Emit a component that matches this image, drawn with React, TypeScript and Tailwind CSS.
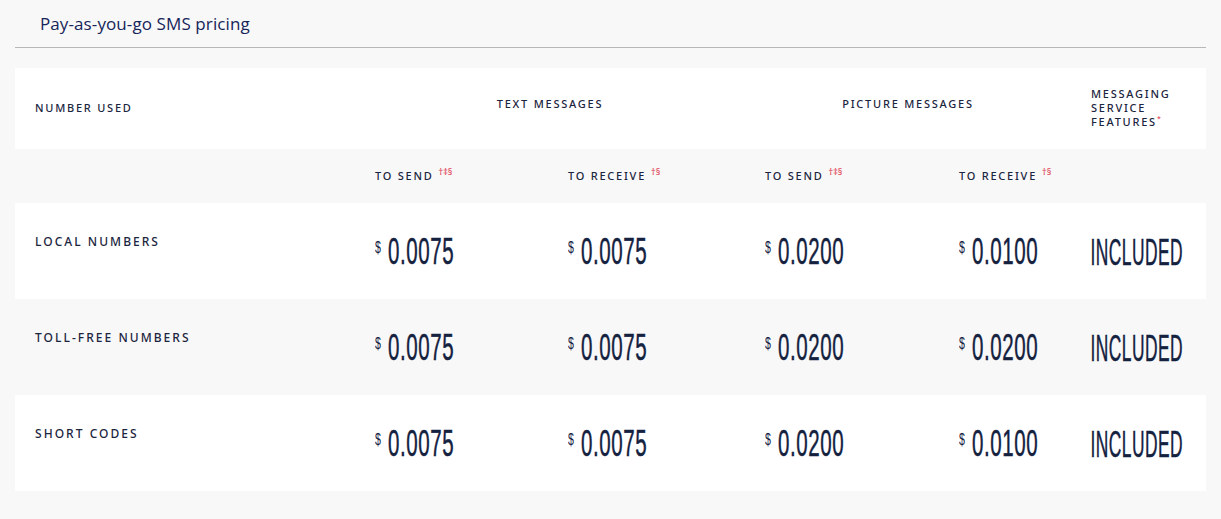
const cols = 'grid grid-cols-[340px_193px_197px_194px_132px_134px]'

const rows = [
  { label: 'LOCAL NUMBERS', prices: ['0.0075', '0.0075', '0.0200', '0.0100'], bg: 'bg-white' },
  { label: 'TOLL-FREE NUMBERS', prices: ['0.0075', '0.0075', '0.0200', '0.0200'], bg: 'bg-[#f8f8f8]' },
  { label: 'SHORT CODES', prices: ['0.0075', '0.0075', '0.0200', '0.0100'], bg: 'bg-white' },
]

function Sup({ marks }: { marks: string }) {
  return <span className="ml-[5px] text-[9px] leading-none text-[#e0485a] tracking-normal relative -top-[5px]">{marks}</span>
}

function Price({ value }: { value: string }) {
  return (
    <div className="flex items-start pl-[20px] pt-[2px] text-[#14213f]">
      <span className="shrink-0 text-[17px] leading-none inline-block scale-x-[0.62] origin-left font-['Liberation_Sans',sans-serif] mt-[1px] w-[13px]">$</span>
      <span className="shrink-0 text-[37px] leading-[28px] inline-block scale-x-[0.555] origin-left font-['Liberation_Sans',sans-serif] tracking-[1px] whitespace-nowrap [-webkit-text-stroke:0.5px_#14213f]">{value}</span>
    </div>
  )
}

export default function App() {
  return (
    <div className="min-h-screen bg-[#f8f8f8] px-[15px] font-['Noto_Sans',sans-serif]">
      {/* Title */}
      <div className="border-b border-[#b7b7b7] pl-[25px] pt-[13px] pb-[12px]">
        <h2 className="text-[17px] leading-[22px] tracking-[0.1px] text-[#16245a] font-medium font-['Open_Sans',sans-serif]">Pay-as-you-go SMS pricing</h2>
      </div>

      <div className="mt-[20px] text-[#1b2540]">
        {/* Group header */}
        <div className={`${cols} bg-white h-[81px] items-center text-[11px] tracking-[0.16em] font-medium`}>
          <div className="pl-[20px]">NUMBER USED</div>
          <div className="col-span-2 text-center pb-[8px]">TEXT MESSAGES</div>
          <div className="col-span-2 text-center pb-[8px]">PICTURE MESSAGES</div>
          <div className="pl-[20px] leading-[14px]">
            MESSAGING<br />SERVICE<br />FEATURES<span className="text-[7px] text-[#e0485a] relative -top-[5px] tracking-normal">*</span>
          </div>
        </div>

        {/* Sub header */}
        <div className={`${cols} h-[54px] items-center text-[11px] tracking-[0.16em] font-medium`}>
          <div />
          <div className="pl-[20px]">TO SEND<Sup marks="†‡§" /></div>
          <div className="pl-[20px]">TO RECEIVE<Sup marks="†§" /></div>
          <div className="pl-[20px]">TO SEND<Sup marks="†‡§" /></div>
          <div className="pl-[20px]">TO RECEIVE<Sup marks="†§" /></div>
          <div />
        </div>

        {/* Price rows */}
        {rows.map((r) => (
          <div key={r.label} className={`${cols} ${r.bg} h-[96px] items-center`}>
            <div className="self-start pl-[20px] pt-[30px] text-[12px] tracking-[0.17em] font-medium">{r.label}</div>
            {r.prices.map((p, i) => (
              <Price key={i} value={p} />
            ))}
            <div className="flex justify-end pr-[22px] pt-[4px] whitespace-nowrap">
              <span className="shrink-0 text-[37px] leading-[28px] inline-block scale-x-[0.47] origin-right font-['Liberation_Sans',sans-serif] tracking-[1px] text-[#14213f] [-webkit-text-stroke:0.5px_#14213f]">INCLUDED</span>
            </div>
          </div>
        ))}
      </div>
    </div>
  )
}
